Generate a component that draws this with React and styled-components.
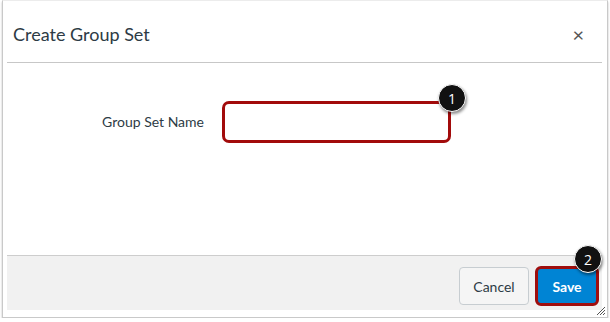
import React from 'react';
import styled, { createGlobalStyle } from 'styled-components';

const GlobalStyle = createGlobalStyle`
  body {
    margin: 0;
    background: #ffffff;
    font-family: Lato, "Liberation Sans", sans-serif;
  }
`;

const Frame = styled.div`
  box-sizing: border-box;
  margin-left: 2px;
  width: 606px;
  height: 318px;
  padding: 0 5px 7px 4px;
  border: 1px solid #c9c9c9;
  border-top: 1px solid #ececec;
  box-shadow: 0 2px 2px rgba(0, 0, 0, 0.25);
  display: flex;
  flex-direction: column;
  position: relative;
`;

const Header = styled.div`
  display: flex;
  align-items: center;
  justify-content: space-between;
  padding: 4px 18px 0 6px;
  border-bottom: 1px solid #c7c7c7;
  box-sizing: border-box;
  height: 62px;
`;

const Title = styled.h2`
  margin: 0;
  font-size: 18px;
  font-weight: 400;
  color: #2d3b45;
`;

const Close = styled.span`
  font-size: 20px;
  color: #555;
  line-height: 1;
`;

const Body = styled.div`
  flex: 1;
  display: grid;
  grid-template-columns: 197px 229px;
  column-gap: 18px;
  align-items: start;
  padding-top: 38px;
`;

const Label = styled.label`
  text-align: right;
  font-size: 14px;
  color: #2d3b45;
  padding-top: 12px;
`;

const Field = styled.div`
  position: relative;
  width: 229px;
`;

const Input = styled.div`
  box-sizing: border-box;
  height: 42px;
  border: 3px solid #a20b0b;
  border-radius: 7px;
  background: #fff;
`;

const Badge = styled.span`
  position: absolute;
  top: ${p => p.top}px;
  right: ${p => p.right}px;
  width: 28px;
  height: 28px;
  border-radius: 50%;
  background: #111;
  color: #fff;
  border: 1px solid #fff;
  box-shadow: 1px 2px 3px rgba(0, 0, 0, 0.45);
  display: flex;
  align-items: center;
  justify-content: center;
  font-family: "Open Sans", "Liberation Sans", sans-serif;
  font-size: 14px;
  box-sizing: border-box;
`;

const Footer = styled.div`
  height: 55px;
  background: #f1f1f1;
  border-top: 1px solid #cdcdcd;
  box-sizing: border-box;
  display: flex;
  align-items: center;
  justify-content: flex-end;
  gap: 6px;
  padding: 6px 3px 0 0;
`;

const CancelButton = styled.button`
  height: 38px;
  width: 70px;
  border: 1px solid #c7cdd1;
  border-radius: 4px;
  background: #f5f5f5;
  color: #2d3b45;
  font-family: Lato, "Liberation Sans", sans-serif;
  font-size: 14px;
  padding: 0;
`;

const SaveWrap = styled.div`
  position: relative;
  border: 3px solid #9f0e0e;
  border-radius: 6px;
  background: #9f0e0e;
`;

const SaveButton = styled.button`
  display: block;
  height: 34px;
  width: 58px;
  border: none;
  border-radius: 3px;
  background: #0084d4;
  color: #fff;
  font-family: Lato, "Liberation Sans", sans-serif;
  font-weight: 700;
  font-size: 14px;
  padding: 0;
`;

const Grip = styled.svg`
  position: absolute;
  right: 1px;
  bottom: 1px;
`;

export default function App() {
  return (
    <>
      <GlobalStyle />
      <Frame>
        <Header>
          <Title>Create Group Set</Title>
          <Close>×</Close>
        </Header>
        <Body>
          <Label>Group Set Name</Label>
          <Field>
            <Input />
            <Badge top={-17} right={-15}>1</Badge>
          </Field>
        </Body>
        <Footer>
          <CancelButton>Cancel</CancelButton>
          <SaveWrap>
            <SaveButton>Save</SaveButton>
            <Badge top={-24} right={-6}>2</Badge>
          </SaveWrap>
        </Footer>
        <Grip width="10" height="10" viewBox="0 0 10 10">
          <path d="M9 1L1 9M9 4L4 9M9 7L7 9" stroke="#555" strokeWidth="1" />
        </Grip>
      </Frame>
    </>
  );
}
